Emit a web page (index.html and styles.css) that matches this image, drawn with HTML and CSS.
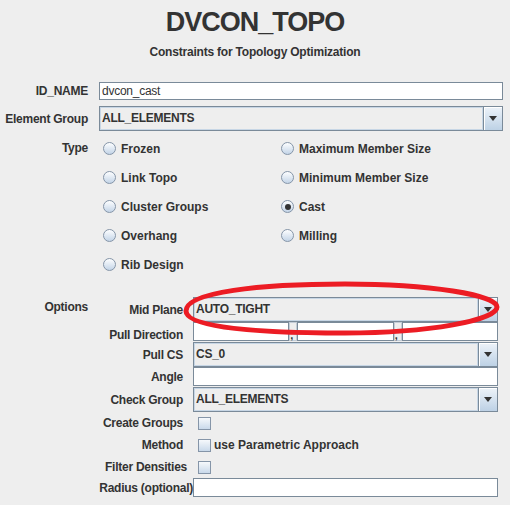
FILE: index.html
```html
<!DOCTYPE html>
<html lang="en">
<head>
    <meta charset="UTF-8">
    <meta name="viewport" content="width=device-width, initial-scale=1.0">
    <title>DVCON_TOPO</title>
    <link rel="stylesheet" href="styles.css">
</head>
<body>

    <h1>DVCON_TOPO</h1>
    <p class="subtitle">Constraints for Topology Optimization</p>

    <div class="form">
        <!-- Basic fields -->
        <div class="row row-id">
            <span class="lbl">ID_NAME</span>
            <div class="field field-id">dvcon_cast</div>
        </div>
        <div class="row row-group">
            <span class="lbl">Element Group</span>
            <div class="combo">
                <span class="combo-value">ALL_ELEMENTS</span>
                <span class="combo-arrow"></span>
            </div>
        </div>

        <!-- Type radio buttons -->
        <div class="row row-type">
            <span class="lbl">Type</span>
            <div class="radios">
                <span class="radio"><span class="dot"></span>Frozen</span>
                <span class="radio"><span class="dot"></span>Maximum Member Size</span>
                <span class="radio"><span class="dot"></span>Link Topo</span>
                <span class="radio"><span class="dot"></span>Minimum Member Size</span>
                <span class="radio"><span class="dot"></span>Cluster Groups</span>
                <span class="radio"><span class="dot checked"></span>Cast</span>
                <span class="radio"><span class="dot"></span>Overhang</span>
                <span class="radio"><span class="dot"></span>Milling</span>
                <span class="radio"><span class="dot"></span>Rib Design</span>
            </div>
        </div>

        <!-- Options -->
        <div class="row row-options">
            <span class="lbl">Options</span>
            <div class="options">
                <div class="opt opt-combo">
                    <span class="opt-lbl">Mid Plane</span>
                    <div class="combo">
                        <span class="combo-value">AUTO_TIGHT</span>
                        <span class="combo-arrow"></span>
                    </div>
                </div>
                <div class="opt opt-text">
                    <span class="opt-lbl lbl-pull">Pull Direction</span>
                    <div class="triple">
                        <div class="field"></div>
                        <span class="sep">,</span>
                        <div class="field"></div>
                        <span class="sep">,</span>
                        <div class="field"></div>
                    </div>
                </div>
                <div class="opt opt-combo">
                    <span class="opt-lbl">Pull CS</span>
                    <div class="combo">
                        <span class="combo-value">CS_0</span>
                        <span class="combo-arrow"></span>
                    </div>
                </div>
                <div class="opt opt-text">
                    <span class="opt-lbl">Angle</span>
                    <div class="field"></div>
                </div>
                <div class="opt opt-combo">
                    <span class="opt-lbl">Check Group</span>
                    <div class="combo">
                        <span class="combo-value">ALL_ELEMENTS</span>
                        <span class="combo-arrow"></span>
                    </div>
                </div>
                <div class="opt opt-check">
                    <span class="opt-lbl">Create Groups</span>
                    <span class="box"></span>
                </div>
                <div class="opt opt-check">
                    <span class="opt-lbl">Method</span>
                    <span class="box"></span>
                    <span class="box-text">use Parametric Approach</span>
                </div>
                <div class="opt opt-check">
                    <span class="opt-lbl lbl-filter">Filter Densities</span>
                    <span class="box"></span>
                </div>
                <div class="opt opt-radius">
                    <span class="opt-lbl lbl-radius">Radius (optional)</span>
                    <div class="field"></div>
                </div>
            </div>
        </div>
    </div>

    <!-- red highlight drawn over the Mid Plane row -->
    <svg class="mark" width="510" height="505" viewBox="0 0 510 505">
        <path d="M 186 311 C 186 292, 260 284, 345 284 C 430 284, 497 295, 497 307 C 497 320, 430 333, 345 333 C 260 333, 186 328, 186 311 Z"
              fill="none" stroke="#ec1c24" stroke-width="5"/>
    </svg>

</body>
</html>
```

FILE: styles.css
```css
body { margin: 0; background: #eeeeee; color: #333333; font-family: "Liberation Sans", Arial, sans-serif; font-size: 12px; font-weight: bold; letter-spacing: -0.25px; }
h1 { margin: 9px 0 0; font-size: 27px; line-height: 27px; letter-spacing: -1px; text-align: center; }
.subtitle { margin: 9px 0 0; line-height: 14px; letter-spacing: -0.2px; text-align: center; }

.form { margin: 23px 7px 0 0; }
.row { display: flex; align-items: center; }
.lbl { width: 88px; margin-right: 11px; flex-shrink: 0; text-align: right; white-space: nowrap; }
.row-group { margin-top: 6px; }
.row-type { margin-top: 3px; align-items: flex-start; }
.row-type .lbl { line-height: 29px; }
.row-options { margin-top: 18px; align-items: flex-start; }
.row-options .lbl { line-height: 20px; }

/* text fields and combo boxes */
.field { flex: 1; height: 19px; box-sizing: border-box; border: 1px solid #7a8a99; background: #ffffff; padding-left: 2px; font-weight: normal; line-height: 17px; }
.field-id { height: 18px; line-height: 16px; }
.combo { flex: 1; display: flex; height: 25px; box-sizing: border-box; border: 1px solid #7a8a99; background: #eeeeee; }
.combo-value { flex: 1; padding-left: 2px; line-height: 23px; box-shadow: inset 1px 1px 0 #c7d6e5, inset -1px -1px 0 #c7d6e5; }
.combo-arrow { width: 18px; display: flex; align-items: center; justify-content: center; border-left: 1px solid #7a8a99; background: linear-gradient(#edf3f9, #bdd1e5); box-shadow: inset 1px 1px 0 #ffffff; }
.combo-arrow::after { content: ""; border-left: 4px solid transparent; border-right: 4px solid transparent; border-top: 5px solid #333333; }

/* radio buttons */
.radios { flex: 1; display: grid; grid-template-columns: 178px 1fr; grid-auto-rows: 29px; padding-left: 4px; }
.radio { display: flex; align-items: center; gap: 5px; letter-spacing: 0; }
.dot { width: 13px; height: 13px; box-sizing: border-box; border: 1px solid #8595a8; border-radius: 50%; background: linear-gradient(#fdfeff, #c3d4e7); display: flex; align-items: center; justify-content: center; }
.dot.checked::after { content: ""; width: 6px; height: 6px; border-radius: 50%; background: #333333; }

/* options block */
.options { flex: 1; margin-right: 5px; }
.opt { display: flex; align-items: center; }
.opt-lbl { width: 94px; flex-shrink: 0; padding-right: 10px; box-sizing: border-box; text-align: right; white-space: nowrap; }
.lbl-filter { padding-right: 6px; }
.lbl-radius { padding-right: 0; }
.opt-combo { height: 25px; }
.opt-text { height: 20px; align-items: flex-start; }
.opt-text .opt-lbl { line-height: 20px; }
.opt-text .lbl-pull { padding-top: 3px; line-height: 20px; }
.opt-check { height: 22px; }
.opt-radius { height: 19px; }
.triple { flex: 1; display: flex; }
.sep { width: 8px; height: 19px; box-sizing: border-box; border: 1px solid #c3ccd6; background: #eeeeee; font-size: 11px; line-height: 24px; text-align: left; }

/* checkboxes */
.box { width: 13px; height: 13px; margin-left: 5px; box-sizing: border-box; border: 1px solid #8595a8; background: linear-gradient(#f6f9fc, #c9d9ea); }
.box-text { margin-left: 3px; letter-spacing: 0; }

/* annotation overlay */
.mark { position: absolute; top: 0; left: 0; pointer-events: none; }
```
